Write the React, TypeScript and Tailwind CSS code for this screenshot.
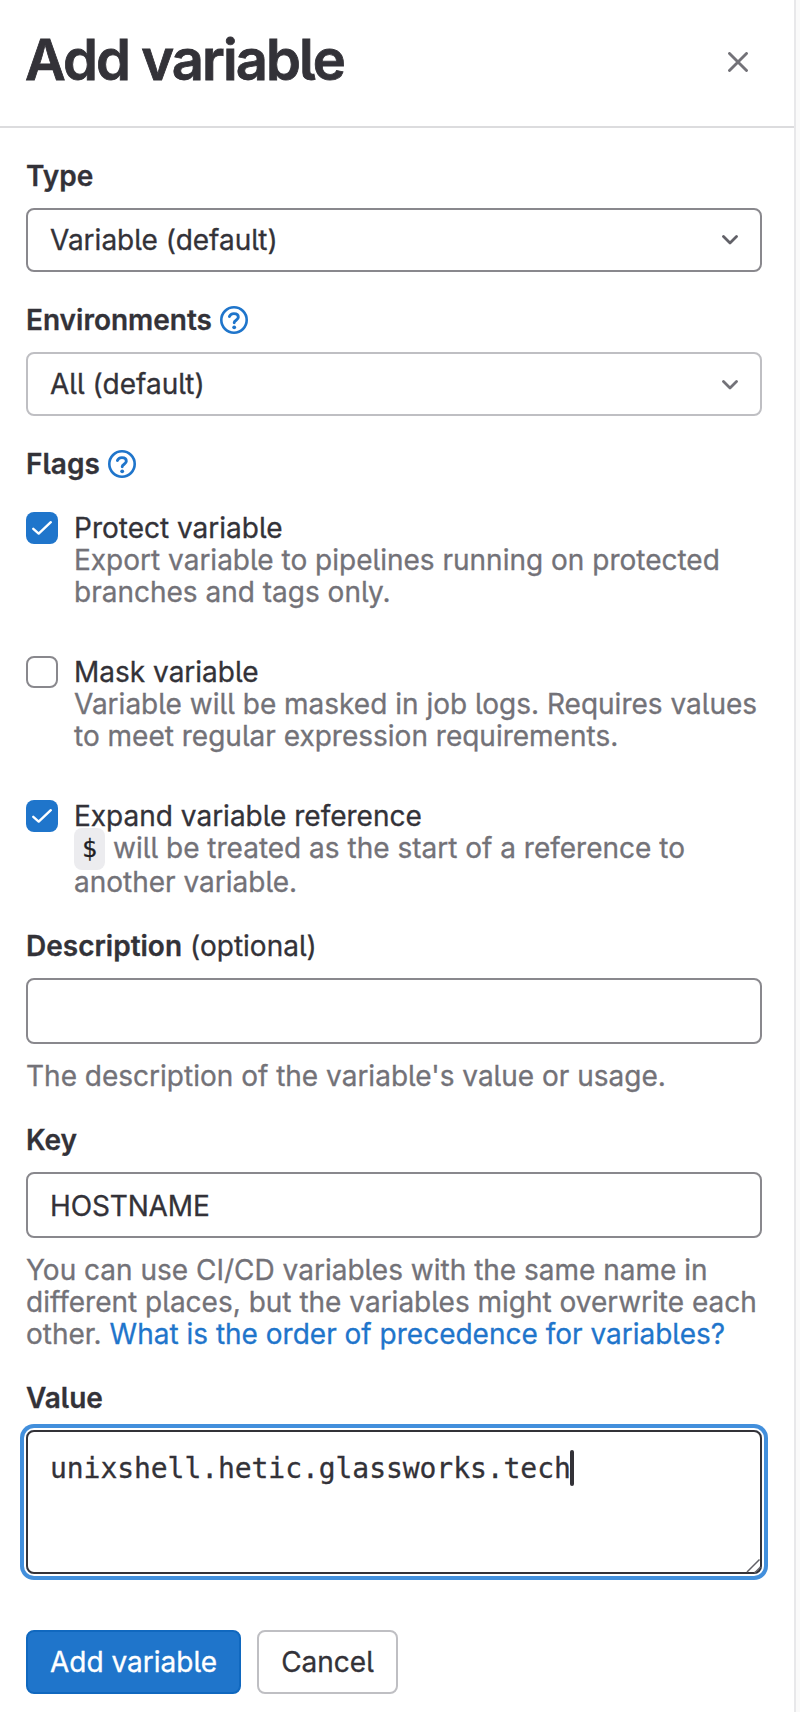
import { ReactNode } from "react";

const sans = "font-['Inter','Noto_Sans',sans-serif] [font-feature-settings:'cv05'_1] [-webkit-text-stroke:0.3px]";

function Chevron({ className }: { className: string }) {
  return (
    <svg width="16" height="10" viewBox="0 0 16 10" className={className} fill="none" stroke="currentColor" strokeWidth="2.8" strokeLinecap="round" strokeLinejoin="round">
      <path d="M1.500 1.500 8 7.900l6.500-6.400" />
    </svg>
  );
}

function HelpIcon() {
  return (
    <svg width="28" height="28" viewBox="0 0 28 28" className="text-[#1f75cb]" fill="none" stroke="currentColor" strokeWidth="2.6">
      <circle cx="14" cy="14" r="12.7" />
      <path d="M9.400 10.500c.7-1.800 2.400-2.900 4.500-2.900 2.600 0 4.400 1.400 4.400 3.600 0 2.900-4.100 3.100-4.100 5.500" strokeLinecap="round" strokeWidth="2.900" />
      <circle cx="14.200" cy="21.300" r="1.900" fill="currentColor" stroke="none" />
    </svg>
  );
}

function Label({ children, className }: { children: ReactNode; className: string }) {
  return <div className={`flex h-8 items-center gap-2 font-semibold ${className}`}>{children}</div>;
}

function Select({ value, border, icon }: { value: string; border: string; icon: string }) {
  return (
    <button type="button" className={`mt-4 flex h-16 w-full items-center justify-between rounded-lg border-2 bg-white px-[22px] text-left ${border}`}>
      <span>{value}</span>
      <Chevron className={icon} />
    </button>
  );
}

function Flag({ checked, label, children }: { checked: boolean; label: string; children: ReactNode }) {
  return (
    <div className="flex gap-4">
      {checked ? (
        <span className="flex size-8 shrink-0 items-center justify-center rounded-lg bg-[#1f75cb]">
          <svg width="20" height="16" viewBox="0 0 20 16" fill="none" stroke="#fff" strokeWidth="2.400" strokeLinecap="round" strokeLinejoin="round">
            <path d="M1.300 8.800 6.700 13.600 18.800 2.200" />
          </svg>
        </span>
      ) : (
        <span className="size-8 shrink-0 rounded-lg border-2 border-[#89888d] bg-white" />
      )}
      <div>
        <div>{label}</div>
        <div className="text-[#737278]">{children}</div>
      </div>
    </div>
  );
}

export default function App() {
  return (
    <div className="flex h-[1712px] w-[800px] overflow-hidden bg-[#fafafa]">
      <div className={`h-full w-[796px] border-r-2 border-[#e8e8ea] bg-white text-[28px] leading-8 text-[#333238] ${sans}`}>
        <header className="flex h-32 items-center justify-between border-b-2 border-[#dcdcde] pr-[46px] pl-[26px]">
          <h1 className="-mt-[6px] -ml-px text-[56px] leading-[64px] font-semibold tracking-[-0.034em] [-webkit-text-stroke:0.8px]">Add variable</h1>
          <svg width="20" height="20" viewBox="0 0 20 20" className="-mt-[2px] text-[#737278]" fill="none" stroke="currentColor" strokeWidth="2.900" strokeLinecap="round">
            <path d="M1.500 1.500 18.500 18.500M18.500 1.500 1.500 18.500" />
          </svg>
        </header>
        <main className="pr-8 pl-[26px] pt-8">
          <Label className="">Type</Label>
          <Select value="Variable (default)" border="border-[#89888d]" icon="text-[#626168]" />
          <Label className="mt-8">Environments <HelpIcon /></Label>
          <Select value="All (default)" border="border-[#bfbfc3]" icon="translate-y-px text-[#737278]" />
          <Label className="mt-8">Flags <HelpIcon /></Label>
          <div className="mt-8 flex flex-col gap-12">
            <Flag checked label="Protect variable">
              Export variable to pipelines running on protected<br />branches and tags only.
            </Flag>
            <Flag checked={false} label="Mask variable">
              Variable will be masked in job logs. Requires values<br />to meet regular expression requirements.
            </Flag>
            <Flag checked label="Expand variable reference">
              <div className="flex h-[34px] gap-2">
                <code className="-mt-1 flex h-[42px] w-[31px] items-center justify-center rounded-lg bg-[#ececef] font-['DejaVu_Sans_Mono',monospace] text-[25px] text-[#1f1e24]">$</code>
                <span>will be treated as the start of a reference to</span>
              </div>
              another variable.
            </Flag>
          </div>
          <Label className="mt-8">Description <span className="font-normal">(optional)</span></Label>
          <div className="mt-4 h-[66px] rounded-lg border-2 border-[#89888d]" />
          <p className="mt-4 text-[#737278]">The description of the variable's value or usage.</p>
          <Label className="mt-8">Key</Label>
          <div className="mt-4 flex h-[66px] items-center rounded-lg border-2 border-[#89888d] px-[22px] pt-[2px] tracking-[-0.15px]">HOSTNAME</div>
          <p className="mt-4 text-[#737278]">
            You can use CI/CD variables with the same name in<br />
            different places, but the variables might overwrite each<br />
            other. <a className="text-[#1f75cb]">What is the order of precedence for variables?</a>
          </p>
          <Label className="mt-8">Value</Label>
          <div className="relative mt-4 flex h-36 items-start rounded-lg border-2 border-[#333238] px-[22px] pt-[18px] font-['DejaVu_Sans_Mono',monospace] shadow-[0_0_0_2px_#fff,0_0_0_6px_#428fdc]">
            <span className="pt-px leading-9 tracking-[-0.06px]">unixshell.hetic.glassworks.tech</span>
            <span className="-ml-px h-9 w-1 rounded-full bg-[#333238]" />
            <svg width="16" height="16" viewBox="0 0 16 16" className="absolute -right-[2px] -bottom-[2px]" fill="none" stroke="#626168" strokeWidth="1.500">
              <path d="M1 14 13.500 1.500M8.500 15 14.500 9" />
            </svg>
          </div>
          <div className="mt-14 flex gap-4">
            <button type="button" className="h-16 w-[215px] rounded-lg border-2 border-[#1068bf] bg-[#1f75cb] text-white">Add variable</button>
            <button type="button" className="h-16 w-[141px] rounded-lg border-2 border-[#bfbfc3] bg-white">Cancel</button>
          </div>
        </main>
      </div>
    </div>
  );
}
